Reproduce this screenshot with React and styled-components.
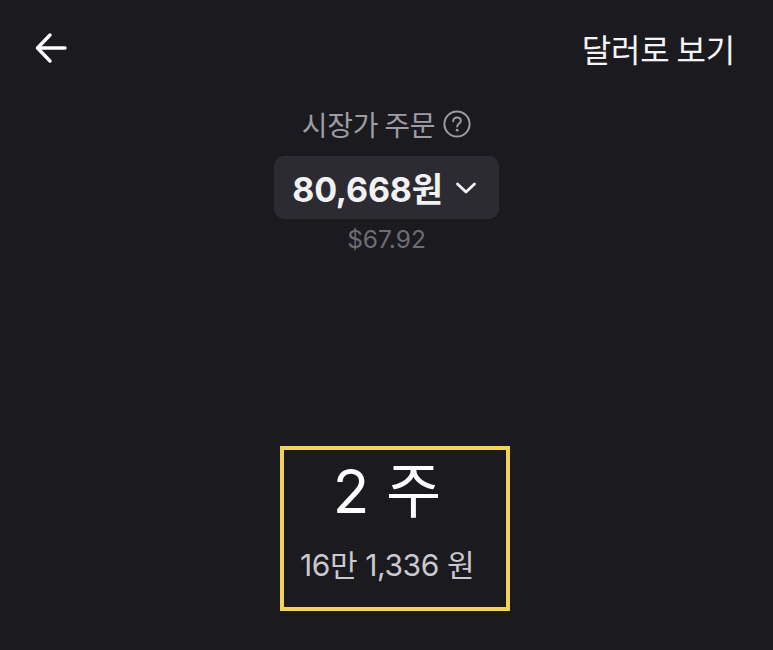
import React from "react";
import styled, { createGlobalStyle } from "styled-components";

const GlobalStyle = createGlobalStyle`
  html, body {
    margin: 0;
    padding: 0;
    background: #1b1a1f;
  }
  body {
    font-family: "Inter", "Noto Sans CJK KR", sans-serif;
    color: #ffffff;
  }
`;

const Page = styled.div`
  width: 773px;
  height: 650px;
  background: #1b1a1f;
  display: flex;
  flex-direction: column;
  overflow: hidden;
`;

const TopBar = styled.div`
  display: flex;
  align-items: center;
  justify-content: space-between;
  padding: 28px 38px 0 34px;
  height: 40px;
`;

const BackButton = styled.button`
  background: none;
  border: none;
  padding: 0;
  display: flex;
  cursor: pointer;
`;

const DollarToggle = styled.span`
  font-family: "Noto Sans CJK KR", sans-serif;
  font-size: 32px;
  color: #f4f4f6;
  letter-spacing: -0.2px;
`;

const OrderSection = styled.div`
  display: flex;
  flex-direction: column;
  align-items: center;
  margin-top: 36px;
`;

const OrderType = styled.div`
  display: flex;
  align-items: center;
  gap: 8px;
  font-family: "Noto Sans CJK KR", sans-serif;
  font-size: 28px;
  color: #9c9ca2;
  letter-spacing: -0.3px;
`;

const PriceSelect = styled.div`
  margin-top: 12px;
  display: flex;
  align-items: center;
  gap: 12px;
  height: 63px;
  padding: 0 22px 0 18px;
  box-sizing: border-box;
  background: #2b2b31;
  border-radius: 10px;
  white-space: nowrap;
`;

const PriceText = styled.span`
  font-size: 34px;
  font-weight: 700;
  color: #f2f2f4;
  letter-spacing: -0.2px;
`;

const UsdText = styled.div`
  margin-top: 5px;
  font-size: 24.5px;
  color: #6d6d73;
`;

const QuantityWrap = styled.div`
  display: flex;
  justify-content: center;
  margin-top: 192px;
`;

const QuantityBox = styled.div`
  margin-left: 17px;
  width: 230px;
  height: 165px;
  box-sizing: border-box;
  border: 4px solid #f3d25a;
  display: flex;
  flex-direction: column;
  align-items: center;
  padding: 5px 16px 0 0;
`;

const Shares = styled.div`
  font-family: "Inter", "Noto Sans CJK KR", sans-serif;
  font-size: 60px;
  color: #ffffff;
  line-height: 1.2;
`;

const Amount = styled.div`
  margin-top: 14px;
  font-size: 30px;
  color: #c9c9ce;
  letter-spacing: -0.4px;
  white-space: nowrap;
`;

function ArrowLeft() {
  return (
    <svg width="34" height="34" viewBox="0 0 34 34" fill="none">
      <path
        d="M31 17H4M16 4L3.5 17L16 30"
        stroke="#ffffff"
        strokeWidth="3.4"
        strokeLinecap="round"
        strokeLinejoin="round"
      />
    </svg>
  );
}

function HelpIcon() {
  return (
    <svg width="28" height="28" viewBox="0 0 28 28" fill="none">
      <circle cx="14" cy="14" r="12.6" stroke="#9c9ca2" strokeWidth="2" />
      <path
        d="M10.2 11.2C10.2 8.9 11.9 7.6 14 7.6C16.1 7.6 17.8 8.9 17.8 10.9C17.8 13.4 14.2 13.8 14.2 16.6"
        stroke="#9c9ca2"
        strokeWidth="2"
        strokeLinecap="round"
      />
      <circle cx="14.2" cy="20.2" r="1.4" fill="#9c9ca2" />
    </svg>
  );
}

function ChevronDown() {
  return (
    <svg width="22" height="14" viewBox="0 0 22 14" fill="none">
      <path
        d="M2.5 3L11 11L19.5 3"
        stroke="#f2f2f4"
        strokeWidth="2.8"
        strokeLinecap="round"
        strokeLinejoin="round"
      />
    </svg>
  );
}

export default function App() {
  return (
    <Page>
      <GlobalStyle />
      <TopBar>
        <BackButton>
          <ArrowLeft />
        </BackButton>
        <DollarToggle>달러로 보기</DollarToggle>
      </TopBar>
      <OrderSection>
        <OrderType>
          시장가 주문 <HelpIcon />
        </OrderType>
        <PriceSelect>
          <PriceText>80,668원</PriceText>
          <ChevronDown />
        </PriceSelect>
        <UsdText>$67.92</UsdText>
      </OrderSection>
      <QuantityWrap>
        <QuantityBox>
          <Shares>2 주</Shares>
          <Amount>16만 1,336 원</Amount>
        </QuantityBox>
      </QuantityWrap>
    </Page>
  );
}
